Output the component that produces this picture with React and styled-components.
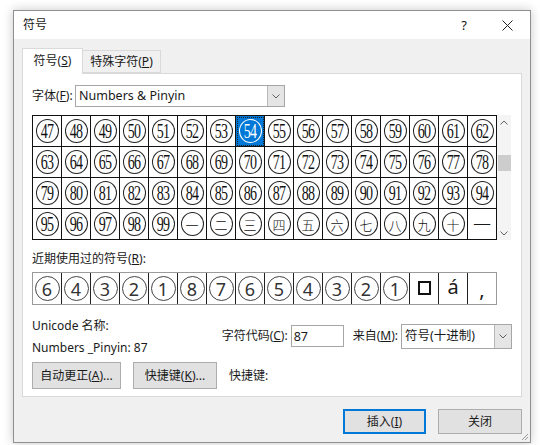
import React from "react";
import styled, { createGlobalStyle } from "styled-components";

const GlobalStyle = createGlobalStyle`
  html, body {
    margin: 0;
    padding: 0;
    background: #ffffff;
  }
  body {
    width: 540px;
    height: 445px;
    overflow: hidden;
    font-family: "Noto Sans", "Noto Sans CJK SC", sans-serif;
    font-size: 12px;
    color: #1a1a1a;
  }
`;

const Page = styled.div`
  width: 540px;
  height: 445px;
  box-sizing: border-box;
  padding: 10px 9px 0 13px;
`;

const Dialog = styled.div`
  position: relative;
  width: 518px;
  height: 433px;
  box-sizing: border-box;
  border: 1px solid #8f8f8f;
  background: #f0f0f0;
  box-shadow: 0 0 10px rgba(0, 0, 0, 0.22);
  display: flex;
  flex-direction: column;
`;

const TitleBar = styled.div`
  height: 28px;
  background: #ffffff;
  display: flex;
  align-items: center;
  padding-left: 9px;
`;

const Title = styled.div`
  flex: 1;
  font-size: 12px;
  line-height: 16px;
`;

const TitleButton = styled.div`
  width: ${(p) => p.$w}px;
  height: 28px;
  display: flex;
  align-items: center;
  justify-content: center;
  font-size: 13px;
  color: #111;
`;

const Body = styled.div`
  padding: 9px 8px 0 8px;
  display: flex;
  flex-direction: column;
`;

const Tabs = styled.div`
  display: flex;
  align-items: flex-end;
  height: 25px;
`;

const Tab = styled.div`
  position: relative;
  z-index: ${(p) => (p.$active ? 2 : 1)};
  box-sizing: border-box;
  width: ${(p) => p.$w}px;
  height: ${(p) => (p.$active ? 26 : 23)}px;
  margin-bottom: ${(p) => (p.$active ? -1 : 0)}px;
  background: ${(p) => (p.$active ? "#ffffff" : "#f0f0f0")};
  border: 1px solid #d9d9d9;
  border-bottom: ${(p) => (p.$active ? "none" : "1px solid #d9d9d9")};
  border-left: ${(p) => (p.$active ? "1px solid #d9d9d9" : "none")};
  display: flex;
  align-items: center;
  justify-content: center;
  padding-bottom: ${(p) => (p.$active ? 1 : 0)}px;
  font-size: 12px;
  line-height: 16px;
`;

const Panel = styled.div`
  box-sizing: border-box;
  width: 500px;
  height: 324px;
  background: #ffffff;
  border: 1px solid #d9d9d9;
  padding: 11px 9px 0 9px;
  display: flex;
  flex-direction: column;
`;

const Row = styled.div`
  display: flex;
  align-items: center;
  gap: ${(p) => p.$gap || 0}px;
  margin-top: ${(p) => p.$mt || 0}px;
`;

const Label = styled.span`
  font-size: 12px;
  line-height: 16px;
  white-space: nowrap;
  width: ${(p) => (p.$w ? `${p.$w}px` : "auto")};
`;

const Combo = styled.div`
  box-sizing: border-box;
  width: ${(p) => p.$w}px;
  height: ${(p) => p.$h}px;
  border: 1px solid #a6a6a6;
  background: #fff;
  display: flex;
  align-items: stretch;
`;

const ComboText = styled.div`
  flex: 1;
  display: flex;
  align-items: center;
  padding-left: 3px;
  font-size: 12.5px;
  line-height: 16px;
`;

const ComboButton = styled.div`
  width: 16px;
  background: #e5e5e5;
  border-left: 1px solid #b8b8b8;
  display: flex;
  align-items: center;
  justify-content: center;
`;

const GridWrap = styled.div`
  display: flex;
  margin-top: 8px;
`;

const Grid = styled.div`
  display: grid;
  grid-template-columns: repeat(16, 29px);
  grid-auto-rows: 31px;
  border-top: 1px solid #111;
  border-left: 1px solid #111;
`;

const Cell = styled.div`
  box-sizing: border-box;
  border-right: 1px solid #111;
  border-bottom: 1px solid #111;
  display: flex;
  align-items: center;
  justify-content: center;
  background: ${(p) => (p.$selected ? "#0078d7" : "#ffffff")};
  outline: ${(p) => (p.$selected ? "1px dotted #222" : "none")};
  outline-offset: -2px;
`;

const Ring = styled.span`
  box-sizing: border-box;
  width: 23px;
  height: 24px;
  border-radius: 50%;
  border: 1px solid ${(p) => (p.$selected ? "#ffffff" : "#222")};
  color: ${(p) => (p.$selected ? "#ffffff" : "#111")};
  display: flex;
  align-items: center;
  justify-content: center;
  overflow: hidden;
`;

const Digits = styled.span`
  font-family: "Liberation Serif", "DejaVu Serif", serif;
  font-size: 20px;
  line-height: 20px;
  letter-spacing: -1px;
  transform: scaleX(0.7);
  display: inline-block;
  margin-left: -1px;
`;

const Han = styled.span`
  font-family: "Noto Sans CJK SC", sans-serif;
  font-size: ${(p) => p.$size || 13}px;
  line-height: 1;
  font-weight: 300;
`;

const Scroll = styled.div`
  width: 14px;
  height: 125px;
  background: #f4f4f4;
  display: flex;
  flex-direction: column;
  align-items: center;
  justify-content: space-between;
  padding: 5px 0 4px;
  box-sizing: border-box;
`;

const Thumb = styled.div`
  width: 13px;
  height: 16px;
  background: #cdcdcd;
  margin-top: -30px;
`;

const Recent = styled.div`
  display: flex;
  margin-top: 5px;
  border-top: 1px solid #9a9a9a;
  border-bottom: 1px solid #9a9a9a;
  border-left: 1px solid #9a9a9a;
  width: fit-content;
`;

const RecentCell = styled.div`
  box-sizing: border-box;
  width: 29px;
  height: 31px;
  border-right: 1px solid ${(p) => (p.$last ? "#9a9a9a" : "#222")};
  display: flex;
  align-items: center;
  justify-content: center;
  font-family: "Noto Sans", "DejaVu Sans", sans-serif;
`;

const RecentRing = styled.span`
  box-sizing: border-box;
  width: 25px;
  height: 25px;
  border-radius: 50%;
  border: 1px solid #444;
  display: flex;
  align-items: center;
  justify-content: center;
  font-size: 18px;
  line-height: 1;
  color: #333;
`;

const BoxGlyph = styled.span`
  box-sizing: border-box;
  width: 13px;
  height: 14px;
  border: 2px solid #111;
  margin-top: -2px;
`;

const Glyph = styled.span`
  font-size: 20px;
  line-height: 1;
  margin-top: ${(p) => p.$mt || 0}px;
`;

const Info = styled.div`
  display: flex;
  align-items: center;
  margin-top: 8px;
`;

const InfoLeft = styled.div`
  width: 190px;
  display: flex;
  flex-direction: column;
`;

const InfoLine = styled.div`
  height: 23px;
  display: flex;
  align-items: center;
  font-size: 12px;
`;

const TextBox = styled.div`
  box-sizing: border-box;
  width: 53px;
  height: 22px;
  border: 1px solid #a6a6a6;
  display: flex;
  align-items: center;
  padding-left: 2px;
  font-size: 12.5px;
`;

const Button = styled.div`
  box-sizing: border-box;
  width: ${(p) => p.$w}px;
  height: ${(p) => p.$h}px;
  background: #e1e1e1;
  border: 1px solid ${(p) => (p.$default ? "#0078d7" : "#adadad")};
  box-shadow: ${(p) => (p.$default ? "inset 0 0 0 1px #0078d7" : "none")};
  display: flex;
  align-items: center;
  justify-content: center;
  font-size: 12px;
  line-height: 16px;
`;

const Footer = styled.div`
  display: flex;
  justify-content: flex-end;
  gap: 12px;
  margin-top: 12px;
`;

const Grip = styled.svg`
  position: absolute;
  right: 1px;
  bottom: 1px;
`;

const Chevron = ({ up, color = "#606060" }) => (
  <svg width="8" height="5" viewBox="0 0 8 5">
    <path
      d={up ? "M0.5 4.5 L4 1 L7.5 4.5" : "M0.5 0.5 L4 4 L7.5 0.5"}
      fill="none"
      stroke={color}
      strokeWidth="1"
    />
  </svg>
);

const hanNums = ["一", "二", "三", "四", "五", "六", "七", "八", "九", "十"];

const cells = [];
for (let n = 47; n <= 99; n++) cells.push({ type: "num", v: String(n) });
hanNums.forEach((h) => cells.push({ type: "han", v: h }));
cells.push({ type: "plain", v: "一" });

const recent = ["6", "4", "3", "2", "1", "8", "7", "6", "5", "4", "3", "2", "1"];

export default function App() {
  return (
    <Page>
      <GlobalStyle />
      <Dialog>
        <TitleBar>
          <Title>符号</Title>
          <TitleButton $w={40}>?</TitleButton>
          <TitleButton $w={46}>
            <svg width="11" height="11" viewBox="0 0 11 11">
              <path d="M0.5 0.5 L10.5 10.5 M10.5 0.5 L0.5 10.5" stroke="#222" strokeWidth="1" />
            </svg>
          </TitleButton>
        </TitleBar>

        <Body>
          <Tabs>
            <Tab $active $w={61}>
              符号(<u>S</u>)
            </Tab>
            <Tab $w={78}>
              特殊字符(<u>P</u>)
            </Tab>
          </Tabs>

          <Panel>
            <Row $gap={2} style={{ height: 22 }}>
              <Label $w={41}>
                字体(<u>F</u>):
              </Label>
              <Combo $w={210} $h={22}>
                <ComboText>Numbers &amp; Pinyin</ComboText>
                <ComboButton>
                  <Chevron />
                </ComboButton>
              </Combo>
            </Row>

            <GridWrap>
              <Grid>
                {cells.map((c, i) => {
                  const selected = c.v === "54";
                  return (
                    <Cell key={i} $selected={selected}>
                      {c.type === "num" && (
                        <Ring $selected={selected}>
                          <Digits>{c.v}</Digits>
                        </Ring>
                      )}
                      {c.type === "han" && (
                        <Ring>
                          <Han>{c.v}</Han>
                        </Ring>
                      )}
                      {c.type === "plain" && <Han $size={18}>{c.v}</Han>}
                    </Cell>
                  );
                })}
              </Grid>
              <Scroll>
                <Chevron up />
                <Thumb />
                <Chevron />
              </Scroll>
            </GridWrap>

            <Row $mt={11}>
              <Label>
                近期使用过的符号(<u>R</u>):
              </Label>
            </Row>
            <Recent>
              {recent.map((d, i) => (
                <RecentCell key={i}>
                  <RecentRing>{d}</RecentRing>
                </RecentCell>
              ))}
              <RecentCell>
                <BoxGlyph />
              </RecentCell>
              <RecentCell>
                <Glyph $mt={-3}>á</Glyph>
              </RecentCell>
              <RecentCell $last>
                <Glyph $mt={2}>,</Glyph>
              </RecentCell>
            </Recent>

            <Info>
              <InfoLeft>
                <InfoLine>Unicode 名称:</InfoLine>
                <InfoLine>Numbers _Pinyin: 87</InfoLine>
              </InfoLeft>
              <Row $gap={3}>
                <Label>
                  字符代码(<u>C</u>):
                </Label>
                <TextBox>87</TextBox>
              </Row>
              <Row $gap={3} style={{ marginLeft: 9 }}>
                <Label>
                  来自(<u>M</u>):
                </Label>
                <Combo $w={111} $h={25}>
                  <ComboText>符号(十进制)</ComboText>
                  <ComboButton>
                    <Chevron />
                  </ComboButton>
                </Combo>
              </Row>
            </Info>

            <Row $gap={12} $mt={3}>
              <Button $w={89} $h={27}>
                自动更正(<u>A</u>)...
              </Button>
              <Button $w={84} $h={27}>
                快捷键(<u>K</u>)...
              </Button>
              <Label>快捷键:</Label>
            </Row>
          </Panel>

          <Footer>
            <Button $w={83} $h={25} $default>
              插入(<u>I</u>)
            </Button>
            <Button $w={84} $h={25}>
              关闭
            </Button>
          </Footer>
        </Body>

        <Grip width="10" height="10" viewBox="0 0 10 10">
          <path d="M9 3 L3 9 M9 6 L6 9" stroke="#9a9a9a" strokeWidth="1" />
        </Grip>
      </Dialog>
    </Page>
  );
}
